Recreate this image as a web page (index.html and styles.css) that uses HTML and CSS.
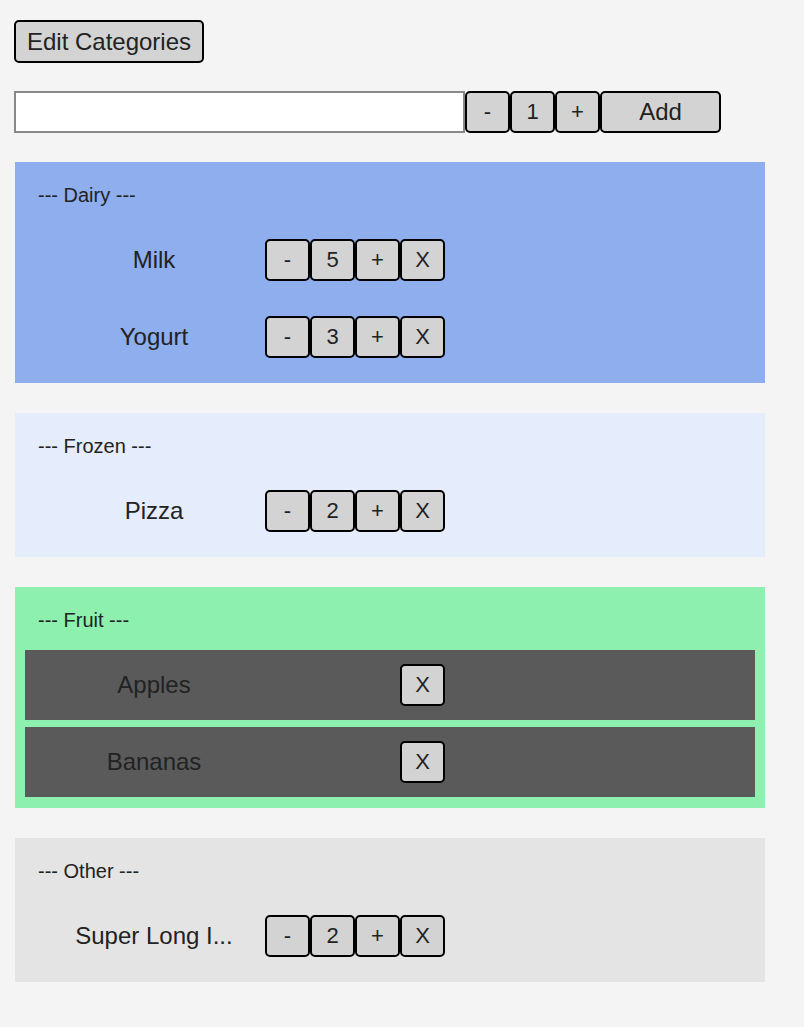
FILE: index.html
```html
<!DOCTYPE html>
<html>
<head>
<meta charset="utf-8">
<link rel="stylesheet" href="styles.css">
</head>
<body>
<div class="app">
  <div class="toolbar">
    <button class="btn edit-btn">Edit Categories</button>
  </div>
  <div class="add-row">
    <input class="add-input" type="text">
    <button class="btn small">-</button>
    <button class="btn small">1</button>
    <button class="btn small">+</button>
    <button class="btn add-btn">Add</button>
  </div>

  <section class="category dairy">
    <div class="cat-title">--- Dairy ---</div>
    <div class="item">
      <div class="name">Milk</div>
      <div class="controls">
        <button class="btn small">-</button><button class="btn small">5</button><button class="btn small">+</button><button class="btn small">X</button>
      </div>
    </div>
    <div class="item">
      <div class="name">Yogurt</div>
      <div class="controls">
        <button class="btn small">-</button><button class="btn small">3</button><button class="btn small">+</button><button class="btn small">X</button>
      </div>
    </div>
  </section>

  <section class="category frozen">
    <div class="cat-title">--- Frozen ---</div>
    <div class="item">
      <div class="name">Pizza</div>
      <div class="controls">
        <button class="btn small">-</button><button class="btn small">2</button><button class="btn small">+</button><button class="btn small">X</button>
      </div>
    </div>
  </section>

  <section class="category fruit">
    <div class="cat-title">--- Fruit ---</div>
    <div class="item done">
      <div class="name">Apples</div>
      <div class="controls">
        <button class="btn small hidden">-</button><button class="btn small hidden">1</button><button class="btn small hidden">+</button><button class="btn small">X</button>
      </div>
    </div>
    <div class="item done">
      <div class="name">Bananas</div>
      <div class="controls">
        <button class="btn small hidden">-</button><button class="btn small hidden">1</button><button class="btn small hidden">+</button><button class="btn small">X</button>
      </div>
    </div>
  </section>

  <section class="category other">
    <div class="cat-title">--- Other ---</div>
    <div class="item">
      <div class="name">Super Long I...</div>
      <div class="controls">
        <button class="btn small">-</button><button class="btn small">2</button><button class="btn small">+</button><button class="btn small">X</button>
      </div>
    </div>
  </section>
</div>
</body>
</html>
```

FILE: styles.css
```css
html, body {
  margin: 0;
  padding: 0;
  background: #f4f4f4;
}
body {
  font-family: "Liberation Sans", Arial, sans-serif;
  color: #222;
}
.app {
  padding: 20px 0 40px 14px;
  width: 752px;
}
.btn {
  font-family: "Liberation Sans", Arial, sans-serif;
  font-size: 24px;
  color: #222;
  background: #d3d3d3;
  border: 2px solid #000;
  border-radius: 5px;
  padding: 0;
  margin: 0;
  height: 42px;
  box-sizing: border-box;
  line-height: 1;
  cursor: pointer;
}
.toolbar {
  display: flex;
}
.edit-btn {
  width: 190px;
  height: 43px;
}
.add-row {
  display: flex;
  margin-top: 28px;
}
.add-input {
  width: 451px;
  height: 42px;
  box-sizing: border-box;
  border: 2px solid #888;
  background: #fff;
  margin: 0;
  padding: 0 4px;
  font-size: 20px;
}
.btn.small {
  width: 45px;
  font-size: 22px;
}
.add-btn {
  width: 121px;
}
.category {
  margin: 29px 0 0 1px;
  width: 750px;
  box-sizing: border-box;
  padding: 10px 10px 11px;
  display: flex;
  flex-direction: column;
  gap: 7px;
}
.category + .category {
  margin-top: 30px;
}
.dairy { background: #8eaeee; }
.frozen { background: #e5ecfc; }
.fruit { background: #8ef0ae; }
.other { background: #e4e4e4; }
.cat-title {
  height: 46px;
  display: flex;
  align-items: center;
  padding-left: 13px;
  font-size: 20px;
}
.item {
  height: 70px;
  display: flex;
  align-items: center;
}
.item.done {
  background: #5a5a5a;
}
.name {
  margin-left: 48px;
  width: 162px;
  text-align: center;
  font-size: 24px;
  white-space: nowrap;
}
.controls {
  margin-left: 30px;
  display: flex;
}
.hidden {
  visibility: hidden;
}
```
